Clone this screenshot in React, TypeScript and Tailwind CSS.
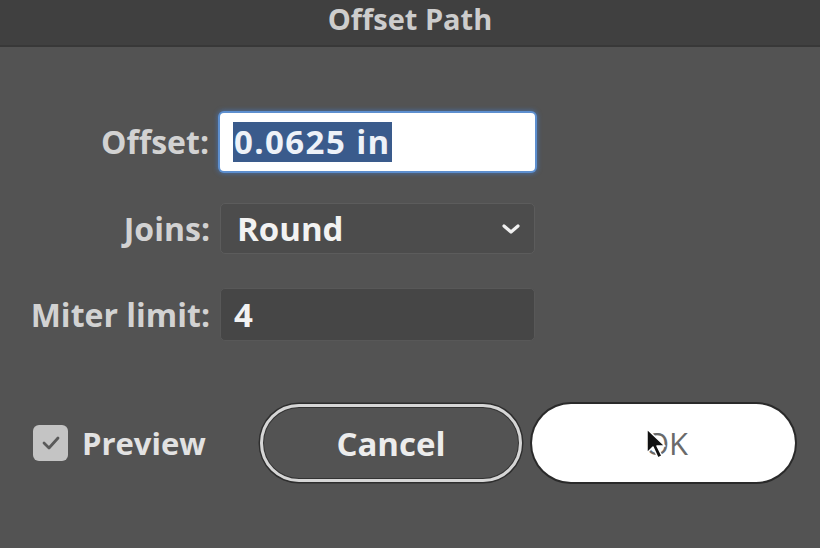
import React from "react";

export default function App() {
  const font = { fontFamily: '"Open Sans", "Liberation Sans", sans-serif' };
  return (
    <div className="w-[820px] h-[548px] bg-[#535353] flex flex-col overflow-hidden" style={font}>
      <div className="h-[47px] bg-[#404040] border-b-2 border-[#383838] flex items-start justify-center">
        <span className="text-[29px] font-bold text-[#cdcdcd] leading-none mt-[4px] tracking-[0px]">Offset Path</span>
      </div>
      <div className="flex-1 flex flex-col pt-[66px]">
        <div className="grid grid-cols-[210px_315px] gap-x-[10px] items-center">
          <div className="text-right text-[32px] font-bold text-[#d2d2d2] leading-none pr-[1px]">Offset:</div>
          <div className="h-[58px] bg-white rounded-[4px] shadow-[0_0_0_2px_#5d8fcf,0_0_4px_3px_rgba(70,120,190,0.6)] flex items-center pl-[13px]">
            <span className="bg-[#3a5b8c] text-[#eef2f8] text-[33px] font-bold leading-[40px] px-[1px] tracking-[1.4px]">0.0625 in</span>
          </div>

          <div className="text-right text-[32px] font-bold text-[#d2d2d2] leading-none mt-[32px]">Joins:</div>
          <div className="h-[51px] mt-[32px] bg-[#4c4c4c] rounded-[5px] border border-[#5c5c5c] flex items-center justify-between pl-[16px] pr-[12px]">
            <span className="text-[33px] font-bold text-[#f2f2f2] leading-none">Round</span>
            <svg width="22" height="14" viewBox="0 0 22 14">
              <path d="M4 4 L11 10 L18 4" fill="none" stroke="#f0f0f0" strokeWidth="3.2" strokeLinecap="round" strokeLinejoin="round" />
            </svg>
          </div>

          <div className="text-right text-[32px] font-bold text-[#d2d2d2] leading-none mt-[34px]">Miter limit:</div>
          <div className="h-[53px] mt-[34px] bg-[#464646] rounded-[5px] border border-[#585858] flex items-center pl-[13px]">
            <span className="text-[33px] font-bold text-[#f2f2f2] leading-none">4</span>
          </div>
        </div>

        <div className="flex items-center mt-[63px]">
          <div className="w-[260px] flex items-center">
            <div className="ml-[33px] w-[35px] h-[36px] rounded-[6px] bg-[#c4c4c4] flex items-center justify-center">
              <svg width="22" height="18" viewBox="0 0 22 18">
                <path d="M4 9 L9 14 L18 4" fill="none" stroke="#5a5a5a" strokeWidth="2.8" strokeLinecap="round" strokeLinejoin="round" />
              </svg>
            </div>
            <span className="ml-[14px] text-[31px] font-bold text-[#e2e2e2] leading-none">Preview</span>
          </div>
          <div className="w-[262px] h-[78px] rounded-full border-[3px] border-[#d6d6d6] shadow-[0_0_0_1.5px_#2e2e2e,inset_0_0_0_1px_#333] flex items-center justify-center">
            <span className="text-[33px] font-bold text-[#ececec] leading-none">Cancel</span>
          </div>
          <div className="relative ml-[10px] w-[263px] h-[78px] rounded-full bg-white shadow-[0_0_0_2px_#2a2a2a] flex items-center justify-center">
            <span className="text-[31px] text-[#6a6a6a] leading-none ml-[6px]">OK</span>
            <svg className="absolute left-[113px] top-[23px]" width="22" height="34" viewBox="0 0 22 34">
              <path d="M2 2 L2 26 L8 20 L13 31 L17 29 L12 19 L20 19 Z" fill="#111" stroke="#fff" strokeWidth="1.5" strokeLinejoin="round" />
            </svg>
          </div>
        </div>
      </div>
    </div>
  );
}
